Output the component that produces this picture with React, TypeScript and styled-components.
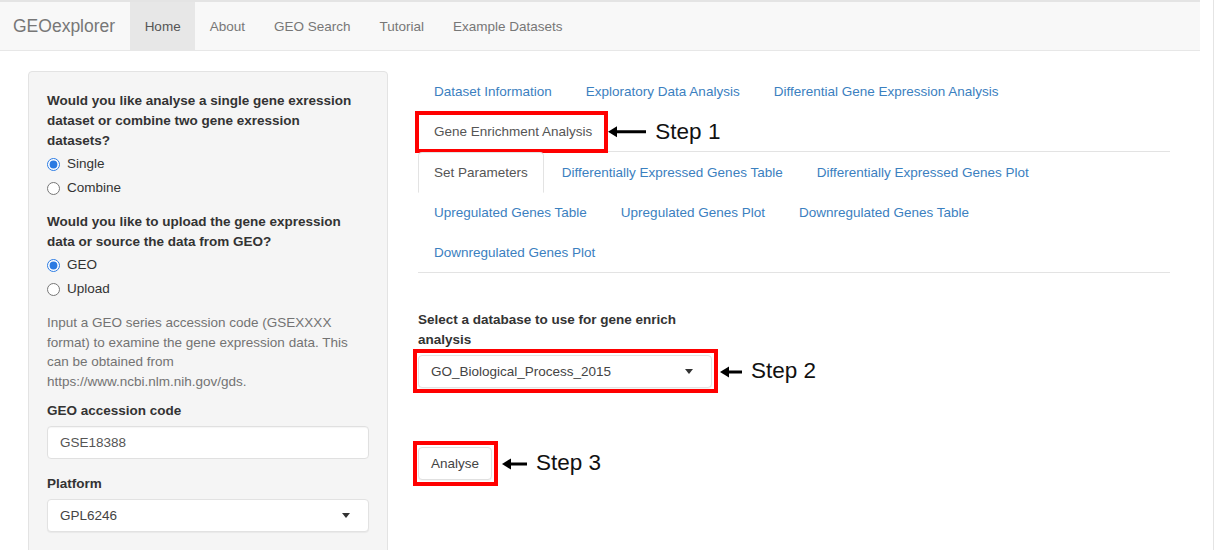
import React from "react";
import styled, { createGlobalStyle, css } from "styled-components";

const GlobalStyle = createGlobalStyle`
  html, body { margin: 0; padding: 0; background: #fff; }
  body {
    font-family: "Liberation Sans", Arial, Helvetica, sans-serif;
    font-size: 13.5px;
    color: #333;
    overflow: hidden;
  }
  * { box-sizing: border-box; }
`;

const redBox = (inset: string) => css`
  position: relative;
  &::after {
    content: "";
    position: absolute;
    inset: ${inset};
    border: 4px solid #f00;
    pointer-events: none;
  }
`;

const Frame = styled.div`
  display: flex;
  height: 550px;
  overflow: hidden;
`;

const Page = styled.div`
  width: 1200px;
  flex: none;
`;

const Edge = styled.div`
  width: 14px;
  border-right: 1px solid #e4e4e4;
  flex: none;
`;

const Navbar = styled.nav`
  display: flex;
  align-items: stretch;
  height: 51px;
  padding-left: 13px;
  background: #f8f8f8;
  border-top: 2px solid #e4e4e4;
  border-bottom: 1px solid #e7e7e7;
`;

const Brand = styled.a`
  display: flex;
  align-items: center;
  padding-right: 15px;
  font-size: 17.5px;
  color: #777;
  text-decoration: none;
`;

const NavLinks = styled.div`
  display: flex;
  align-items: stretch;
`;

const NavLink = styled.a<{ $active?: boolean }>`
  display: flex;
  align-items: center;
  padding: 0 14.5px;
  color: #777;
  text-decoration: none;
  ${(p) =>
    p.$active &&
    css`
      background: #e7e7e7;
      color: #555;
    `}
`;

const Layout = styled.div`
  display: flex;
  align-items: flex-start;
  gap: 30px;
  padding: 20px 30px 0 28px;
`;

const Sidebar = styled.aside`
  width: 360px;
  flex: none;
  min-height: 520px;
  padding: 19px 18px 18px;
  background: #f5f5f5;
  border: 1px solid #e3e3e3;
  border-radius: 4px;
`;

const Question = styled.div<{ $gap?: number }>`
  max-width: 314px;
  font-weight: bold;
  line-height: 20px;
  margin-top: ${(p) => p.$gap ?? 0}px;
`;

const RadioGroup = styled.div`
  display: flex;
  flex-direction: column;
  gap: 4px;
  margin-top: 3px;
`;

const RadioRow = styled.label`
  display: flex;
  align-items: center;
  gap: 7px;
  height: 20px;
  line-height: 20px;
  color: #333;
`;

const Radio = styled.input`
  width: 13px;
  height: 13px;
  margin: 0;
  accent-color: #2a7ae2;
`;

const HelpText = styled.p`
  max-width: 314px;
  margin: 14px 0 0;
  color: #737373;
  line-height: 19.7px;
`;

const FieldLabel = styled.div<{ $gap: number; $width?: number }>`
  font-weight: bold;
  line-height: 20px;
  margin-top: ${(p) => p.$gap}px;
  margin-bottom: 5px;
  ${(p) => p.$width && css`max-width: ${p.$width}px;`}
`;

const TextInput = styled.div`
  height: 33px;
  display: flex;
  align-items: center;
  padding: 0 12px;
  background: #fff;
  border: 1px solid #e0e0e0;
  border-radius: 4px;
  box-shadow: inset 0 1px 1px rgba(0, 0, 0, 0.04);
  color: #555;
`;

const SelectBox = styled.div<{ $width?: number; $marked?: boolean }>`
  height: 33px;
  display: flex;
  align-items: center;
  justify-content: space-between;
  padding: 0 18px 0 12px;
  background: #fff;
  border: 1px solid #e2e2e2;
  border-radius: 4px;
  box-shadow: 0 1px 1px rgba(0, 0, 0, 0.05);
  color: #444;
  ${(p) => p.$width && css`width: ${p.$width}px; flex: none;`}
  ${(p) => p.$marked && redBox("-7px -7px -6px -6px")}
`;

const Caret = styled.span`
  width: 0;
  height: 0;
  border-left: 4.5px solid transparent;
  border-right: 4.5px solid transparent;
  border-top: 5px solid #333;
`;

const Main = styled.main`
  flex: 1;
  min-width: 0;
`;

const TabNav = styled.div`
  display: flex;
  flex-wrap: wrap;
  border-bottom: 1px solid #e3e3e3;
`;

const Tab = styled.a<{ $active?: boolean; $marked?: boolean }>`
  position: relative;
  display: flex;
  align-items: center;
  height: 41px;
  margin: 0 2px -1px 0;
  padding: 0 15px;
  border: 1px solid transparent;
  border-radius: 4px 4px 0 0;
  color: #3b80c0;
  text-decoration: none;
  white-space: nowrap;
  ${(p) =>
    p.$active &&
    css`
      color: #555;
      background: #fff;
      border-color: #e3e3e3 #e3e3e3 transparent;
    `}
  ${(p) => p.$marked && redBox("-1px -1px -2px -4px")}
`;

const FloatingPointer = styled.span`
  position: absolute;
  left: 100%;
  top: 50%;
  transform: translateY(-50%);
  margin-left: 1px;
`;

const Pointer = styled.span<{ $offset?: number }>`
  display: flex;
  align-items: center;
  gap: 9px;
  margin-left: ${(p) => p.$offset ?? 0}px;
  white-space: nowrap;
`;

const StepLabel = styled.span`
  font-family: "Liberation Sans", Arial, sans-serif;
  font-size: 22.5px;
  color: #111;
  line-height: 1;
`;

const Form = styled.div`
  margin-top: 37px;
`;

const AnnotatedRow = styled.div<{ $gap?: number }>`
  display: flex;
  align-items: center;
  margin-top: ${(p) => p.$gap ?? 0}px;
`;

const ActionButton = styled.button`
  height: 33px;
  padding: 0 12px;
  font: inherit;
  color: #444;
  background: #fff;
  border: 1px solid #e0e0e0;
  border-radius: 4px;
  box-shadow: 0 1px 1px rgba(0, 0, 0, 0.05);
  ${redBox("-7px -7px -7px -6px")}
`;

function Arrow({ width }: { width: number }) {
  return (
    <svg width={width} height="12" viewBox={`0 0 ${width} 12`} aria-hidden>
      <polygon points="0,6 9,0.5 9,11.5" fill="#000" />
      <rect x="8" y="4.5" width={width - 8} height="3" fill="#000" />
    </svg>
  );
}

function Step({ label, arrow, offset }: { label: string; arrow: number; offset?: number }) {
  return (
    <Pointer $offset={offset}>
      <Arrow width={arrow} />
      <StepLabel>{label}</StepLabel>
    </Pointer>
  );
}

const mainTabs = [
  "Dataset Information",
  "Exploratory Data Analysis",
  "Differential Gene Expression Analysis",
];

const subTabs = [
  "Differentially Expressed Genes Table",
  "Differentially Expressed Genes Plot",
  "Upregulated Genes Table",
  "Upregulated Genes Plot",
  "Downregulated Genes Table",
  "Downregulated Genes Plot",
];

export default function App() {
  return (
    <>
      <GlobalStyle />
      <Frame>
        <Page>
          <Navbar>
            <Brand>GEOexplorer</Brand>
            <NavLinks>
              <NavLink $active>Home</NavLink>
              <NavLink>About</NavLink>
              <NavLink>GEO Search</NavLink>
              <NavLink>Tutorial</NavLink>
              <NavLink>Example Datasets</NavLink>
            </NavLinks>
          </Navbar>
          <Layout>
            <Sidebar>
              <Question>
                Would you like analyse a single gene exression dataset or combine two gene exression datasets?
              </Question>
              <RadioGroup>
                <RadioRow>
                  <Radio type="radio" name="mode" defaultChecked />
                  Single
                </RadioRow>
                <RadioRow>
                  <Radio type="radio" name="mode" />
                  Combine
                </RadioRow>
              </RadioGroup>
              <Question $gap={14}>
                Would you like to upload the gene expression data or source the data from GEO?
              </Question>
              <RadioGroup>
                <RadioRow>
                  <Radio type="radio" name="source" defaultChecked />
                  GEO
                </RadioRow>
                <RadioRow>
                  <Radio type="radio" name="source" />
                  Upload
                </RadioRow>
              </RadioGroup>
              <HelpText>
                Input a GEO series accession code (GSEXXXX format) to examine the gene expression data. This can be
                obtained from https://www.ncbi.nlm.nih.gov/gds.
              </HelpText>
              <FieldLabel $gap={9}>GEO accession code</FieldLabel>
              <TextInput>GSE18388</TextInput>
              <FieldLabel $gap={15}>Platform</FieldLabel>
              <SelectBox>
                GPL6246
                <Caret />
              </SelectBox>
            </Sidebar>
            <Main>
              <TabNav>
                {mainTabs.map((t) => (
                  <Tab key={t}>{t}</Tab>
                ))}
                <Tab $active $marked>
                  Gene Enrichment Analysis
                  <FloatingPointer>
                    <Step label="Step 1" arrow={38} />
                  </FloatingPointer>
                </Tab>
              </TabNav>
              <TabNav>
                <Tab $active>Set Parameters</Tab>
                {subTabs.map((t) => (
                  <Tab key={t}>{t}</Tab>
                ))}
              </TabNav>
              <Form>
                <FieldLabel $gap={0} $width={294}>
                  Select a database to use for gene enrich analysis
                </FieldLabel>
                <AnnotatedRow>
                  <SelectBox $width={294} $marked>
                    GO_Biological_Process_2015
                    <Caret />
                  </SelectBox>
                  <Step label="Step 2" arrow={22} offset={8} />
                </AnnotatedRow>
                <AnnotatedRow $gap={59}>
                  <ActionButton>Analyse</ActionButton>
                  <Step label="Step 3" arrow={25} offset={10} />
                </AnnotatedRow>
              </Form>
            </Main>
          </Layout>
        </Page>
        <Edge />
      </Frame>
    </>
  );
}
